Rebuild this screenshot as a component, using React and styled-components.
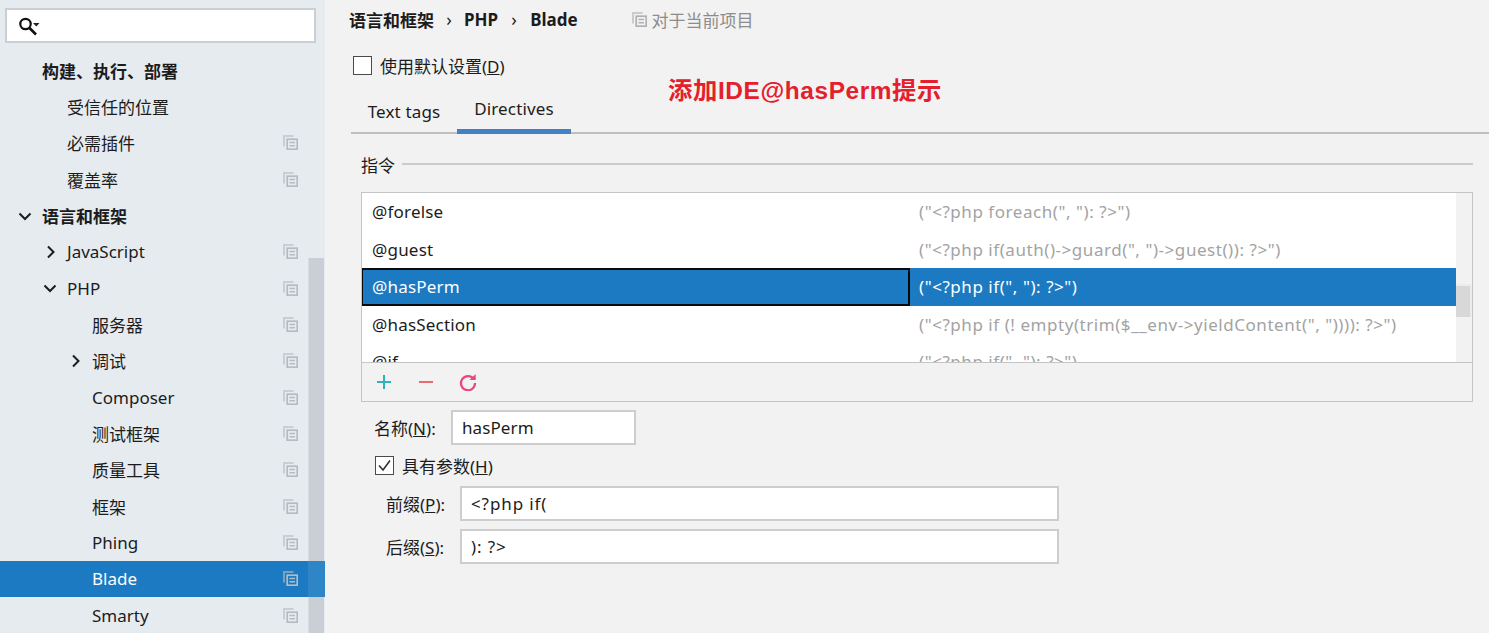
import styled, { createGlobalStyle } from "styled-components";

const GlobalStyle = createGlobalStyle`
  html, body {
    margin: 0;
    padding: 0;
    height: 100%;
    overflow: hidden;
    background: #f2f2f2;
  }
  body {
    font-family: "Noto Sans", "Noto Sans CJK SC", sans-serif;
    font-size: 17px;
    color: #1c1c1c;
  }
`;

const Page = styled.div`
  display: flex;
  width: 1489px;
  height: 633px;
  overflow: hidden;
  position: relative;
`;

const Sidebar = styled.aside`
  position: relative;
  flex: 0 0 325px;
  height: 633px;
  background: #e6ebf0;
  overflow: hidden;
`;

const SearchBox = styled.div`
  display: flex;
  align-items: center;
  box-sizing: border-box;
  width: 311px;
  height: 35px;
  margin: 8px 0 9px 5px;
  padding-left: 12px;
  background: #fff;
  border: 2px solid #c9cfd4;
`;

const TreeRow = styled.div`
  position: relative;
  z-index: ${(p) => (p.$active ? 1 : 0)};
  display: flex;
  align-items: center;
  box-sizing: border-box;
  height: 36.35px;
  padding-left: ${(p) => p.$indent}px;
  padding-right: 27px;
  font-weight: ${(p) => (p.$bold ? 700 : 400)};
  background: ${(p) => (p.$active ? "#1b7ac2" : "transparent")};
  color: ${(p) => (p.$active ? "#fff" : "#1c1c1c")};

  ${(p) =>
    p.$active &&
    `&::after {
      content: "";
      position: absolute;
      right: 0;
      top: 0;
      bottom: 0;
      width: 17px;
      background: rgba(255, 255, 255, 0.09);
    }`}
`;

const Arrow = styled.svg`
  flex: 0 0 14px;
  width: 14px;
  height: 14px;
  margin-left: -24px;
  margin-right: 10px;
`;

const RowLabel = styled.span`
  flex: 1;
  white-space: nowrap;
`;

const Scrollbar = styled.div`
  position: absolute;
  left: 308px;
  top: 258px;
  width: 15px;
  bottom: 0;
  background: #c9cfd5;
  border-left: 1px solid #d8dde1;
`;

const Main = styled.main`
  flex: 1;
  min-width: 0;
  padding-left: 26px;
`;

const Breadcrumb = styled.div`
  display: flex;
  align-items: center;
  height: 38px;
  margin: 0 0 2px -2px;
  font-weight: 700;
  font-size: 17px;
`;

const Crumb = styled.span`
  white-space: nowrap;
`;

const CrumbSep = styled.span`
  width: ${(p) => p.$width}px;
  text-align: center;
  font-weight: 400;
  font-size: 18px;
`;

const ProjectNote = styled.span`
  display: flex;
  align-items: center;
  gap: 5px;
  margin-left: 54px;
  font-weight: 400;
  font-size: 17px;
  color: #8c8c8c;
`;

const CheckRow = styled.label`
  display: flex;
  align-items: center;
  gap: 8px;
  height: 24px;
  margin: ${(p) => p.$margin};
  white-space: nowrap;
  font-size: 17px;
`;

const CheckBox = styled.span`
  display: flex;
  align-items: center;
  justify-content: center;
  box-sizing: border-box;
  width: 19px;
  height: 19px;
  background: #fff;
  border: 1.5px solid #4a4a4a;
`;

const Tabs = styled.div`
  display: flex;
  height: 44px;
  margin-top: 13px;
  box-sizing: border-box;
  border-bottom: 2px solid #bfbfbf;
`;

const Tab = styled.div`
  display: flex;
  align-items: center;
  justify-content: center;
  box-sizing: border-box;
  width: ${(p) => p.$width}px;
  height: 44px;
  padding-bottom: 2px;
  letter-spacing: 0.15px;
  border-bottom: ${(p) => (p.$active ? "5px solid #4480c4" : "none")};
`;

const Annotation = styled.div`
  position: absolute;
  left: 668px;
  top: 75px;
  color: #e3202c;
  font-family: "Liberation Sans", "Noto Sans CJK SC", sans-serif;
  font-weight: 700;
  font-size: 24.4px;
  letter-spacing: 0.6px;
  line-height: 32px;
  white-space: nowrap;
`;

const Group = styled.section`
  margin-left: 10px;
  margin-right: 16px;
`;

const GroupTitle = styled.div`
  display: flex;
  align-items: center;
  gap: 7px;
  height: 30px;
  margin-top: 15px;
`;

const GroupRule = styled.span`
  flex: 1;
  height: 2px;
  background: #cbcbcb;
`;

const TableFrame = styled.div`
  box-sizing: border-box;
  height: 210px;
  margin-top: 13px;
  border: 1px solid #c4c4c4;
`;

const ListArea = styled.div`
  position: relative;
  height: 170px;
  box-sizing: border-box;
  padding-right: 16px;
  background: #f2f2f2;
  overflow: hidden;
  border-bottom: 1px solid #c4c4c4;
`;

const ListRow = styled.div`
  display: grid;
  grid-template-columns: 548px 1fr;
  height: 37.5px;
  background: ${(p) => (p.$selected ? "#1b7ac2" : "#fff")};
`;

const KeyCell = styled.div`
  display: flex;
  align-items: center;
  box-sizing: border-box;
  padding-left: ${(p) => (p.$focus ? 9 : 10)}px;
  letter-spacing: 0.2px;
  color: ${(p) => (p.$focus ? "#fff" : "#1c1c1c")};
  border: ${(p) => (p.$focus ? "2px solid #0a0a0a" : "none")};
  ${(p) => p.$focus && "border-left-width: 1px;"}
`;

const ValueCell = styled.div`
  display: flex;
  align-items: center;
  padding-left: 9px;
  letter-spacing: 0.55px;
  white-space: nowrap;
  color: ${(p) => (p.$selected ? "#fff" : "#a3a3a3")};
`;

const ScrollThumb = styled.div`
  position: absolute;
  right: 0;
  top: 91px;
  box-sizing: border-box;
  width: 16px;
  height: 33px;
  background: #d8d8d8;
  border-top: 2px solid #ececec;
  border-right: 2px solid #ececec;
`;

const Toolbar = styled.div`
  display: flex;
  align-items: center;
  gap: 24px;
  height: 38px;
  padding-left: 13px;
`;

const ToolIcon = styled.svg`
  width: 18px;
  height: 18px;
`;

const FieldRow = styled.div`
  display: flex;
  align-items: center;
  height: 35px;
  margin: ${(p) => p.$margin};
  white-space: nowrap;
`;

const FieldLabel = styled.span`
  flex: 0 0 ${(p) => p.$width}px;
`;

const Input = styled.div`
  display: flex;
  align-items: center;
  box-sizing: border-box;
  width: ${(p) => p.$width}px;
  height: 35px;
  padding-left: 9px;
  letter-spacing: ${(p) => (p.$code ? "0.9px" : "0.1px")};
  background: #fff;
  border: 2px solid #cdcdcd;
`;

const CopyGlyph = ({ color = "#b4bcc2" }) => (
  <svg width="15" height="15" viewBox="0 0 15 15" fill="none">
    <path d="M1 11.5V1h9.5" stroke={color} strokeWidth="2" opacity="0.6" />
    <rect x="4.2" y="4.2" width="10" height="10" stroke={color} strokeWidth="1.7" />
    <path d="M6.5 7.5h5.5M6.5 10.8h5.5" stroke={color} strokeWidth="1.4" />
  </svg>
);

const ChevronRight = () => (
  <Arrow viewBox="0 0 14 14" fill="none">
    <path d="M5 1.5 10.5 7 5 12.5" stroke="#1c1c1c" strokeWidth="2" />
  </Arrow>
);

const ChevronDown = () => (
  <Arrow viewBox="0 0 14 14" fill="none">
    <path d="M1.5 4.5 7 10l5.5-5.5" stroke="#1c1c1c" strokeWidth="2" />
  </Arrow>
);

const tree = [
  { label: "构建、执行、部署", indent: 42, bold: true },
  { label: "受信任的位置", indent: 67 },
  { label: "必需插件", indent: 67, copy: true },
  { label: "覆盖率", indent: 67, copy: true },
  { label: "语言和框架", indent: 42, bold: true, open: true },
  { label: "JavaScript", indent: 67, copy: true, closed: true },
  { label: "PHP", indent: 67, copy: true, open: true },
  { label: "服务器", indent: 92, copy: true },
  { label: "调试", indent: 92, copy: true, closed: true },
  { label: "Composer", indent: 92, copy: true },
  { label: "测试框架", indent: 92, copy: true },
  { label: "质量工具", indent: 92, copy: true },
  { label: "框架", indent: 92, copy: true },
  { label: "Phing", indent: 92, copy: true },
  { label: "Blade", indent: 92, copy: true, active: true },
  { label: "Smarty", indent: 92, copy: true },
];

const directives = [
  { key: "@forelse", value: '("<?php foreach(", "): ?>")' },
  { key: "@guest", value: '("<?php if(auth()->guard(", ")->guest()): ?>")' },
  { key: "@hasPerm", value: '("<?php if(", "): ?>")', selected: true },
  { key: "@hasSection", value: '("<?php if (! empty(trim($__env->yieldContent(", ")))): ?>")' },
  { key: "@if", value: '("<?php if(", "): ?>")' },
];

const App = () => {
  return (
    <Page>
      <GlobalStyle />
      <Sidebar>
        <SearchBox>
          <svg width="24" height="22" viewBox="0 0 24 22" fill="none">
            <circle cx="6.5" cy="9" r="5.2" stroke="#111" strokeWidth="2.2" />
            <path d="M10.5 13 17 19.5" stroke="#111" strokeWidth="2.6" />
            <path d="M14 8h6.5l-3.2 3.4z" fill="#222" />
          </svg>
        </SearchBox>
        {tree.map((item) => (
          <TreeRow
            key={item.label}
            $indent={item.indent}
            $bold={item.bold}
            $active={item.active}
          >
            {item.open && <ChevronDown />}
            {item.closed && <ChevronRight />}
            <RowLabel>{item.label}</RowLabel>
            {item.copy && <CopyGlyph />}
          </TreeRow>
        ))}
        <Scrollbar />
      </Sidebar>
      <Main>
        <Breadcrumb>
          <Crumb>语言和框架</Crumb>
          <CrumbSep $width={30}>›</CrumbSep>
          <Crumb>PHP</Crumb>
          <CrumbSep $width={32}>›</CrumbSep>
          <Crumb>Blade</Crumb>
          <ProjectNote>
            <CopyGlyph color="#b0b0b0" />
            对于当前项目
          </ProjectNote>
        </Breadcrumb>
        <CheckRow $margin="15px 0 0 2px">
          <CheckBox />
          <span>
            使用默认设置(<u>D</u>)
          </span>
        </CheckRow>
        <Tabs>
          <Tab $width={106}>Text tags</Tab>
          <Tab $width={114} $active>
            Directives
          </Tab>
        </Tabs>
        <Annotation>添加IDE@hasPerm提示</Annotation>
        <Group>
          <GroupTitle>
            指令
            <GroupRule />
          </GroupTitle>
          <TableFrame>
            <ListArea>
              {directives.map((row) => (
                <ListRow key={row.key} $selected={row.selected}>
                  <KeyCell $focus={row.selected}>{row.key}</KeyCell>
                  <ValueCell $selected={row.selected}>{row.value}</ValueCell>
                </ListRow>
              ))}
              <ScrollThumb />
            </ListArea>
            <Toolbar>
              <ToolIcon viewBox="0 0 18 18" fill="none">
                <path d="M9 2v14M2 9h14" stroke="#2fb3bd" strokeWidth="2" />
              </ToolIcon>
              <ToolIcon viewBox="0 0 18 18" fill="none">
                <path d="M2 9h14" stroke="#ec6a6f" strokeWidth="2" />
              </ToolIcon>
              <ToolIcon viewBox="0 0 18 18" fill="none">
                <path
                  d="M14.6 6A7 7 0 1 0 16 10"
                  stroke="#e8467c"
                  strokeWidth="2.2"
                />
                <path d="M10.5 7h6.2V1z" fill="#e8467c" />
              </ToolIcon>
            </Toolbar>
          </TableFrame>
          <FieldRow $margin="8px 0 0 13px">
            <FieldLabel $width={77}>
              名称(<u>N</u>):
            </FieldLabel>
            <Input $width={185}>hasPerm</Input>
          </FieldRow>
          <CheckRow $margin="8px 0 0 14px">
            <CheckBox>
              <svg width="15" height="15" viewBox="0 0 15 15" fill="none">
                <path d="M2 7.5 6 12 13 2.5" stroke="#333" strokeWidth="1.6" />
              </svg>
            </CheckBox>
            <span>
              具有参数(<u>H</u>)
            </span>
          </CheckRow>
          <FieldRow $margin="9px 0 0 25px">
            <FieldLabel $width={74}>
              前缀(<u>P</u>):
            </FieldLabel>
            <Input $width={599} $code>
              {"<?php if("}
            </Input>
          </FieldRow>
          <FieldRow $margin="8px 0 0 25px">
            <FieldLabel $width={74}>
              后缀(<u>S</u>):
            </FieldLabel>
            <Input $width={599} $code>
              {"): ?>"}
            </Input>
          </FieldRow>
        </Group>
      </Main>
    </Page>
  );
};

export default App;
